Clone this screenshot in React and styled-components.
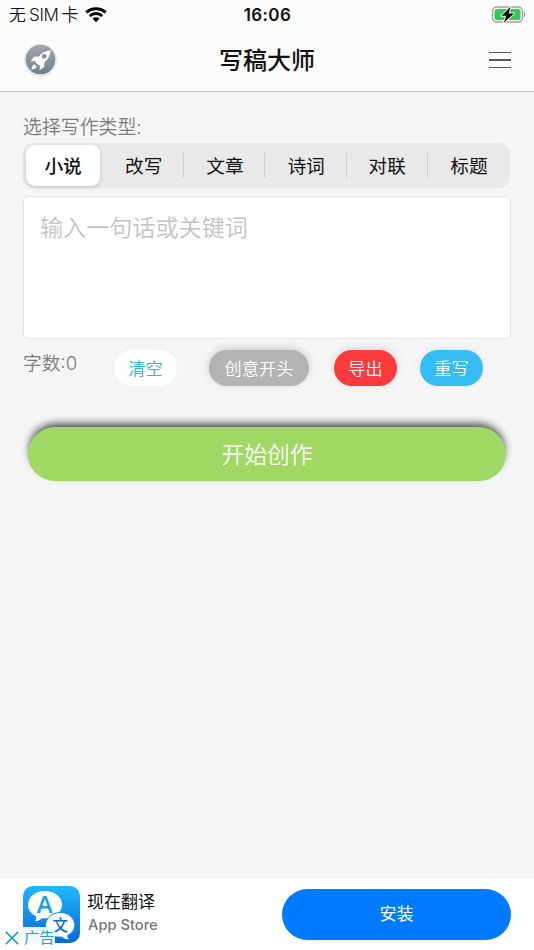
import React, {useState} from "react";
import styled, {createGlobalStyle} from "styled-components";

const GlobalStyle = createGlobalStyle`
  * {
    box-sizing: border-box;
  }
  body {
    margin: 0;
    background: #f5f5f5;
    font-family: Inter, "Noto Sans CJK SC", sans-serif;
  }
  button, textarea {
    font-family: inherit;
    border: none;
    padding: 0;
    outline: none;
  }
`

const Page = styled.div`
  display: flex;
  flex-direction: column;
  width: 534px;
  height: 950px;
  overflow: hidden;
  background: #f5f5f5;
`

const Header = styled.header`
  height: 92px;
  background: #fbfbfb;
  border-bottom: 1px solid #c2c2c2;
`

const StatusBar = styled.div`
  display: grid;
  grid-template-columns: 1fr auto 1fr;
  align-items: center;
  height: 29px;
  padding: 0 8px 0 9px;
  color: #111;
`

const Carrier = styled.div`
  display: flex;
  align-items: center;
  gap: 6px;
  font-size: 17px;
  font-weight: 350;
  line-height: 27px;
  white-space: pre;
`

const CarrierName = styled.span`
  padding-top: 2px;
`

const Sim = styled.span`
  margin: 0 3px;
  letter-spacing: -0.3px;
`

const Clock = styled.div`
  font-size: 17px;
  font-weight: 600;
  letter-spacing: 0.35px;
`

const Battery = styled.svg`
  justify-self: end;
`

const NavBar = styled.div`
  display: grid;
  grid-template-columns: 1fr auto 1fr;
  align-items: center;
  height: 61px;
  padding: 0 23px 0 23px;
`

const Title = styled.h1`
  margin: 0;
  padding-top: 1px;
  font-size: 24px;
  font-weight: 500;
  line-height: 61px;
  color: #111;
`

const Rocket = styled.svg`
  margin-top: 1px;
`

const MenuButton = styled.button`
  display: flex;
  flex-direction: column;
  justify-self: end;
  gap: 6px;
  width: 22px;
  background: none;
`

const MenuLine = styled.span`
  height: 1.6px;
  background: #555;
`

const Main = styled.main`
  flex: 1;
  padding: 20px 23px 0;
`

const Label = styled.div`
  height: 31px;
  padding-top: 2px;
  font-size: 18.9px;
  font-weight: 350;
  line-height: 28px;
  color: #7c7c7c;
`

const Segments = styled.div`
  display: grid;
  grid-template-columns: repeat(6, 1fr);
  width: 487px;
  height: 45px;
  border-radius: 11px;
  background: #e9e9e9;
`

const Segment = styled.button`
  display: flex;
  align-items: center;
  min-width: 0;
  padding: ${props => (props.$active ? '2px 4px 2px 3px' : '0 1px 0 0')};
  background: none;
  color: #111;
  font-size: 18.7px;
  font-weight: ${props => (props.$active ? 500 : 400)};
`

const SegmentText = styled.span`
  flex: 1;
  height: ${props => (props.$active ? '41px' : '25px')};
  line-height: ${props => (props.$active ? '43px' : '27px')};
  border-radius: ${props => (props.$active ? '9px' : '0')};
  background: ${props => (props.$active ? '#fff' : 'none')};
  box-shadow: ${props => (props.$active ? '0 2px 5px rgba(0,0,0,0.14)' : 'none')};
  border-right: ${props => (props.$divider ? '1px solid #cfcfcf' : 'none')};
`

const Editor = styled.textarea`
  display: block;
  width: 488px;
  height: 143px;
  margin-top: 8px;
  padding: 14px 16px;
  border: 1px solid #e6e6e6;
  border-radius: 5px;
  background: #fff;
  resize: none;
  font-size: 23.1px;
  font-weight: 350;
  line-height: 34px;
  color: #222;
  &::placeholder {
    color: #c3c3c7;
    opacity: 1;
  }
`

const Toolbar = styled.div`
  display: flex;
  height: 36px;
  margin-top: 11px;
`

const Counter = styled.div`
  width: 91px;
  font-size: 18.7px;
  font-weight: 350;
  line-height: 28px;
  color: #7c7c7c;
`

const Chip = styled.button`
  width: ${props => (props.$wide ? '100px' : '63px')};
  height: 36px;
  margin-right: ${props => props.$gap};
  border-radius: 18px;
  background: ${props => props.$bg};
  color: ${props => props.$color || '#fff'};
  font-size: 17.2px;
  font-weight: 350;
  line-height: 37px;
  white-space: nowrap;
  box-shadow: 0 -2px 9px rgba(0,0,0,${props => props.$shadow});
`

const StartButton = styled.button`
  display: block;
  width: 478px;
  height: 54px;
  margin: 41px 0 0 5px;
  border-radius: 27px;
  background: #9fd863;
  color: #fff;
  font-size: 22.8px;
  font-weight: 350;
  line-height: 56px;
  box-shadow: 0 -5px 9px -2px rgba(0,0,0,0.75);
`

const AdBanner = styled.footer`
  position: relative;
  display: flex;
  height: 71px;
  padding: 7px 23px 0;
  background: #fff;
`

const AdInfo = styled.div`
  flex: 1;
  padding-left: 7px;
`

const AdTitle = styled.div`
  margin-top: 4px;
  font-size: 17px;
  line-height: 24px;
  color: #111;
`

const AdStore = styled.div`
  padding-left: 1px;
  font-size: 14.7px;
  font-weight: 450;
  line-height: 22px;
  color: #777;
`

const InstallButton = styled.button`
  width: 229px;
  height: 51px;
  margin-top: 3px;
  border-radius: 26px;
  background: #007aff;
  color: #fff;
  font-size: 17px;
  line-height: 49px;
`

const AdBadge = styled.div`
  position: absolute;
  left: 0;
  bottom: 1px;
  display: flex;
  align-items: center;
  gap: 5px;
  height: 22px;
  padding: 0 0 0 5px;
  background: rgba(255,255,255,0.95);
  color: #24a6b9;
  font-size: 15.3px;
  line-height: 24px;
`

const TranslateText = styled.text`
  font-family: ${props => props.$font};
  font-size: ${props => props.$size}px;
  font-weight: ${props => props.$weight};
  text-anchor: middle;
`

const WifiIcon = () => (
    <svg width="22" height="16" viewBox="0 0 22 16">
        <g fill="none" stroke="#000" strokeWidth="3">
            <path d="M1.3 5.4C6.7 .4 15.3 .4 20.7 5.4"/>
            <path d="M4.8 9C8.4 5.8 13.6 5.8 17.2 9"/>
        </g>
        <path d="M7.5 11.5C9.5 9.9 12.5 9.9 14.5 11.5L11 15.2Z"/>
    </svg>
)

const BatteryIcon = () => (
    <Battery width="35" height="18" viewBox="0 0 35 18">
        <rect x="1.5" y="1" width="30" height="15" rx="4.5" fill="none" stroke="#a3a3a3" strokeWidth="1.4"/>
        <rect x="3.5" y="3" width="26" height="11" rx="2.5" fill="#34c759"/>
        <path d="M32.8 5.7C34.9 6.5 34.9 10.5 32.8 11.3Z" fill="#999"/>
        <path d="M19.5 0.7L10.5 9.8H15.3L12.8 16.8L23 7.4H17.6Z" fill="#000" stroke="#fbfbfb" strokeWidth="1.8"
              paintOrder="stroke" strokeLinejoin="round"/>
    </Battery>
)

const RocketIcon = () => (
    <Rocket width="35" height="35" viewBox="0 0 35 35">
        <defs>
            <linearGradient id="rocketBg" x1="0" y1="0" x2="0" y2="1">
                <stop offset="0" stopColor="#a1a6ab"/>
                <stop offset="1" stopColor="#71808d"/>
            </linearGradient>
        </defs>
        <circle cx="17.5" cy="17.3" r="16.5" fill="#e5e8ed"/>
        <circle cx="17.5" cy="16.5" r="14.8" fill="url(#rocketBg)"/>
        <path d="M27.7 7.3C22.8 8 18.5 10 15.8 13.4L10.8 13.7L7.4 18.4L12.1 18.1L12.8 19.5L15.3 22L17 22.7L16.5 27.2L21.2 23.9L21.6 19.2C25 16.2 27.4 12.2 27.7 7.3Z" fill="#fff"/>
        <circle cx="21.2" cy="13.4" r="2.3" fill="#858e97"/>
        <path d="M11.4 21.2L13.8 23.8C13 25.8 10.8 26.2 8.5 26.5C8.7 24.2 9.4 22 11.4 21.2Z" fill="#fff"/>
        <path d="M10.8 23.3L11.7 24.2" stroke="#87929d" strokeWidth="1"/>
    </Rocket>
)

const TranslateIcon = () => (
    <svg width="57" height="57" viewBox="0 0 57 57">
        <defs>
            <linearGradient id="translateBg" x1="0" y1="0" x2="0" y2="1">
                <stop offset="0" stopColor="#20b9fb"/>
                <stop offset="1" stopColor="#0766dc"/>
            </linearGradient>
        </defs>
        <rect width="57" height="57" rx="10" fill="url(#translateBg)"/>
        <path d="M22 5C12.2 5 5 11 5 18.8C5 23.6 8.2 28 13 30.4C13.5 32.5 13 34 12.2 35.5C15.1 35.1 17.2 33.8 19 32.3C30.2 33.3 39 27.2 39 18.8C39 11 31.8 5 22 5Z" fill="#fff"/>
        <path d="M37.5 27C29.3 27 23 32.5 23 39.2C23 46 29.5 51.2 38.5 50.5C40.5 52.2 42.7 53 45.5 53.2C44.3 51.7 44 50.5 44.3 49.1C48.7 47.1 51.3 43.4 51.3 39.2C51.3 32.5 45.5 27 37.5 27Z"
              fill="#fff" stroke="#1a8fe9" strokeWidth="1.8" paintOrder="stroke"/>
        <TranslateText x="21.8" y="27" fill="#17a0ec" $font='"Open Sans", sans-serif' $size={24} $weight={600}>A</TranslateText>
        <TranslateText x="37.2" y="44.8" fill="#096dd4" $font='"Noto Sans CJK SC", sans-serif' $size={15.5} $weight={500}>文</TranslateText>
    </svg>
)

const CloseIcon = () => (
    <svg width="14" height="14" viewBox="0 0 14 14" stroke="#24a6b9" strokeWidth="1.7">
        <path d="M.8 .8L13.2 13.2M13.2 .8L.8 13.2"/>
    </svg>
)

const types = ["小说", "改写", "文章", "诗词", "对联", "标题"];

const App = () => {
    const [type, setType] = useState(0);
    const [text, setText] = useState("");

    const renderSegments = () => {
        return types.map((name, i) => (
            <Segment key={name} $active={i === type} onClick={() => setType(i)}>
                <SegmentText $active={i === type}
                             $divider={i !== type && i !== type - 1 && i < types.length - 1}>
                    {name}
                </SegmentText>
            </Segment>
        ));
    }

    return (
        <Page>
            <GlobalStyle/>
            <Header>
                <StatusBar>
                    <Carrier>
                        <CarrierName>无<Sim>SIM</Sim>卡</CarrierName>
                        <WifiIcon/>
                    </Carrier>
                    <Clock>16:06</Clock>
                    <BatteryIcon/>
                </StatusBar>
                <NavBar>
                    <RocketIcon/>
                    <Title>写稿大师</Title>
                    <MenuButton aria-label="菜单">
                        <MenuLine/>
                        <MenuLine/>
                        <MenuLine/>
                    </MenuButton>
                </NavBar>
            </Header>
            <Main>
                <Label>选择写作类型:</Label>
                <Segments>{renderSegments()}</Segments>
                <Editor placeholder="输入一句话或关键词" value={text} onChange={e => setText(e.target.value)}/>
                <Toolbar>
                    <Counter>字数:{text.length}</Counter>
                    <Chip $bg="#fff" $color="#38b3d6" $gap="32px" $shadow={0.01} onClick={() => setText("")}>清空</Chip>
                    <Chip $bg="#b3b3b3" $gap="25px" $shadow={0.16} $wide>创意开头</Chip>
                    <Chip $bg="#fb3a3c" $gap="23px" $shadow={0.12}>导出</Chip>
                    <Chip $bg="#35bcf2" $gap="0" $shadow={0.05}>重写</Chip>
                </Toolbar>
                <StartButton>开始创作</StartButton>
            </Main>
            <AdBanner>
                <TranslateIcon/>
                <AdInfo>
                    <AdTitle>现在翻译</AdTitle>
                    <AdStore>App Store</AdStore>
                </AdInfo>
                <InstallButton>安装</InstallButton>
                <AdBadge>
                    <CloseIcon/>
                    <span>广告</span>
                </AdBadge>
            </AdBanner>
        </Page>
    );
}

export default App;
